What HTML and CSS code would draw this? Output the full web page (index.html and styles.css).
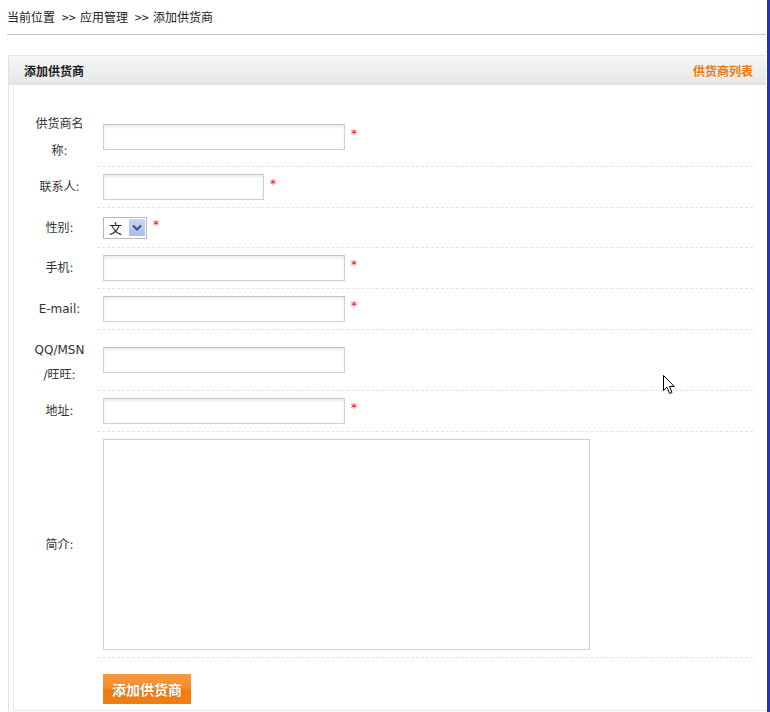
FILE: index.html
```html
<!DOCTYPE html>
<html lang="zh-CN">
<head>
<meta charset="utf-8">
<title>添加供货商</title>
<link rel="stylesheet" href="styles.css">
</head>
<body>
<div class="page">
  <div class="crumb">当前位置<span class="sep">&gt;&gt;</span>应用管理<span class="sep">&gt;&gt;</span>添加供货商</div>
  <div class="rule"></div>
  <div class="panel">
    <div class="panel-head">
      <span class="title">添加供货商</span>
      <a class="link" href="#">供货商列表</a>
    </div>
    <form class="panel-body">
      <div class="row">
        <div class="lbl lbl-name">供货商名<br>称:</div>
        <div class="val r-tall"><input class="txt" type="text"><span class="req">*</span></div>
      </div>
      <div class="row">
        <div class="lbl">联系人:</div>
        <div class="val"><input class="txt short" type="text"><span class="req">*</span></div>
      </div>
      <div class="row">
        <div class="lbl">性别:</div>
        <div class="val r-sex">
          <span class="sel">
            <select><option>文</option><option>男</option></select>
            <span class="arrow"><svg width="16" height="17" viewBox="0 0 16 17"><path d="M4 6.5 L8 10.5 L12 6.5" fill="none" stroke="#3f5784" stroke-width="2.2"/></svg></span>
          </span><span class="req">*</span>
        </div>
      </div>
      <div class="row">
        <div class="lbl">手机:</div>
        <div class="val"><input class="txt" type="text"><span class="req">*</span></div>
      </div>
      <div class="row">
        <div class="lbl">E-mail:</div>
        <div class="val"><input class="txt" type="text"><span class="req">*</span></div>
      </div>
      <div class="row">
        <div class="lbl lbl-qq">QQ/MSN<br>/旺旺:</div>
        <div class="val r-qq"><input class="txt" type="text"></div>
      </div>
      <div class="row">
        <div class="lbl">地址:</div>
        <div class="val"><input class="txt" type="text"><span class="req">*</span></div>
      </div>
      <div class="row">
        <div class="lbl">简介:</div>
        <div class="val"><textarea class="area"></textarea></div>
      </div>
      <div class="row">
        <div class="lbl"></div>
        <div class="val btn-cell"><button class="btn" type="button">添加供货商</button></div>
      </div>
    </form>
  </div>
  <svg class="cursor" width="13" height="20" viewBox="0 0 13 20"><path d="M0.5 0.5 L0.5 15.5 L4 12.2 L6.6 18.5 L9 17.5 L6.5 11.5 L11.3 11.5 Z" fill="#fff" stroke="#000" stroke-width="1"/></svg>
</div>
</body>
</html>
```
FILE: styles.css
```css
html, body {
  margin: 0;
  padding: 0;
  background: #fff;
}
body {
  font-family: "DejaVu Sans", "Noto Sans CJK SC", sans-serif;
  font-size: 12px;
  color: #333;
}
.page {
  position: relative;
  width: 770px;
  min-height: 712px;
  box-sizing: border-box;
  border-right: 3px solid #2535a8;
  overflow: hidden;
}
.crumb {
  font-family: "Noto Sans CJK SC", sans-serif;
  padding: 10px 0 0 7px;
  line-height: 14px;
  height: 14px;
  color: #222;
}
.sep {
  display: inline-block;
  width: 13px;
  margin: 0 5px 0 7px;
  font-size: 12px;
  letter-spacing: 0;
  text-align: center;
  transform: scaleX(1.05);
}
.rule {
  margin: 10px 1px 0 7px;
  height: 1px;
  background: #c8c8c8;
}
.panel {
  margin: 20px 1px 0 8px;
  border-left: 1px solid #e0e0e0;
}
.panel-head {
  height: 30px;
  display: flex;
  align-items: center;
  justify-content: space-between;
  padding: 0 13px 0 15px;
  box-sizing: border-box;
  background: linear-gradient(#f6f6f6, #e9e9e9 85%, #e2e2e2);
  border-top: 1px solid #e6e6e6;
  font-family: "Noto Sans CJK SC", sans-serif;
  font-weight: bold;
  font-size: 12px;
}
.title {
  color: #1a1a1a;
}
.link {
  color: #ec7a0c;
  text-decoration: none;
}
.panel-body {
  margin: 0 0 0 4px;
  border-left: 1px solid #ececec;
  border-bottom: 1px solid #ececec;
  padding: 23px 13px 6px 8px;
}
.row {
  display: flex;
}
.lbl {
  width: 75px;
  flex: none;
  display: flex;
  align-items: center;
  justify-content: center;
  text-align: center;
  line-height: 25px;
  color: #333;
}
.lbl-name {
  line-height: 27px;
}
.lbl-qq {
  padding-top: 4px;
}
.val {
  flex: 1;
  display: flex;
  align-items: center;
  box-sizing: border-box;
  min-height: 41px;
  padding: 7px 0 7px 6px;
  border-bottom: 1px dashed #e4e4e4;
}
.r-tall { min-height: 59px; }
.r-sex { min-height: 40px; }
.r-qq { min-height: 61px; }
.txt {
  width: 242px;
  height: 26px;
  box-sizing: border-box;
  border: 1px solid #cfcfcf;
  border-top-color: #c4c4c4;
  box-shadow: inset 0 2px 3px #ececec;
  margin: 0;
  padding: 0 4px;
  font-size: 12px;
  background: #fff;
}
.short {
  width: 161px;
}
.req {
  color: #f00;
  font-size: 12px;
  margin-left: 6px;
  margin-top: -6px;
}
.sel {
  position: relative;
  display: inline-block;
  width: 44px;
  height: 22px;
}
.sel select {
  appearance: none;
  -webkit-appearance: none;
  width: 44px;
  height: 22px;
  box-sizing: border-box;
  border: 1px solid #b8b8b8;
  background: #fff;
  margin: 0;
  padding: 0 0 0 5px;
  font-family: "Noto Sans CJK SC", sans-serif;
  font-size: 13px;
  color: #222;
}
.arrow {
  position: absolute;
  top: 2px;
  right: 2px;
  width: 16px;
  height: 17px;
  background: linear-gradient(#c9d7f5, #a9bdea);
  border-radius: 1px;
  pointer-events: none;
}
.arrow svg {
  display: block;
}
.area {
  width: 487px;
  height: 211px;
  box-sizing: border-box;
  border: 1px solid #cfcfcf;
  margin: 0;
  resize: none;
  background: #fff;
}
.btn-cell {
  border-bottom: none;
  padding: 16px 0 0 6px;
  min-height: 0;
}
.btn {
  width: 88px;
  height: 30px;
  border: none;
  margin: 0;
  padding: 0;
  background: linear-gradient(#f89a3c 0%, #f58d2a 45%, #ee7c12 55%, #f07f14 100%);
  color: #fff;
  font-family: "Noto Sans CJK SC", sans-serif;
  font-weight: bold;
  font-size: 14px;
  text-shadow: 0 0 1px #b55a00;
}
.cursor {
  position: absolute;
  left: 663px;
  top: 375px;
}
```
